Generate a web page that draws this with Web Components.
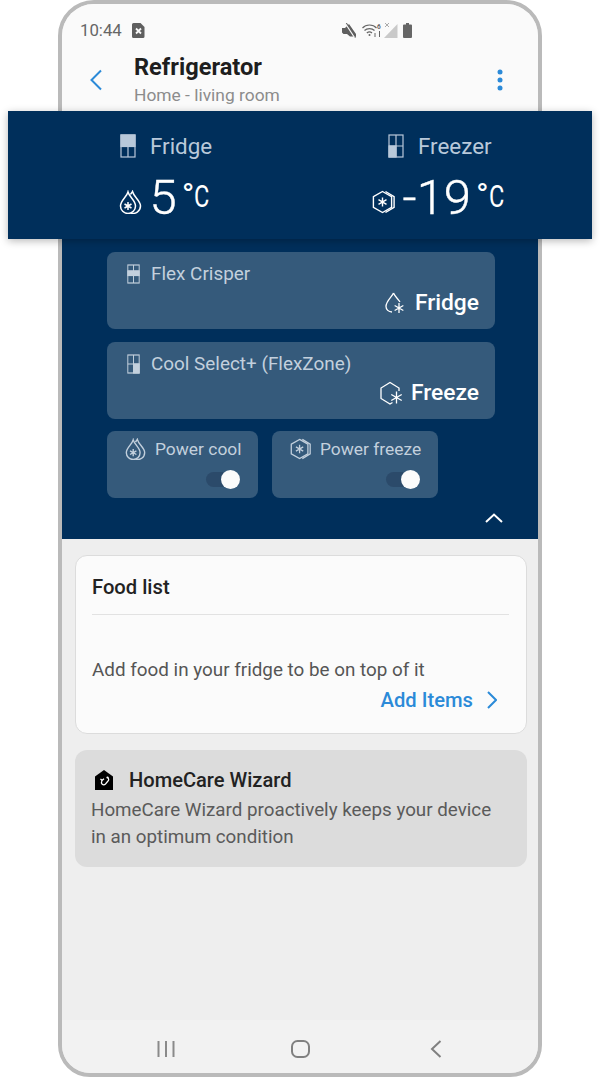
<!DOCTYPE html>
<html lang="en">
<head>
<meta charset="utf-8">
<title>Refrigerator</title>
<style>
  html, body { margin: 0; padding: 0; background: #fff; }
  body { font-family: Roboto, "Liberation Sans", sans-serif; }
</style>
</head>
<body>
<smart-phone>
  <status-bar></status-bar>
  <app-bar title="Refrigerator" subtitle="Home - living room"></app-bar>
  <control-panel>
    <mode-card label="Flex Crisper" zone="flex" mode="Fridge" icon="drop"></mode-card>
    <mode-card label="Cool Select+ (FlexZone)" zone="select" mode="Freeze" icon="hex"></mode-card>
    <div slot="power">
      <power-card label="Power cool" icon="drops" style="width:151px"></power-card>
      <power-card label="Power freeze" icon="hexes" style="width:166px;margin-left:14px"></power-card>
    </div>
  </control-panel>
  <food-card></food-card>
  <wizard-card></wizard-card>
  <nav-bar></nav-bar>
  <temp-banner slot="overlay"></temp-banner>
</smart-phone>

<script>
const star = (x, y, r) => {
    const a = r * 0.87, b = r * 0.5;
    return `<path d="M${x} ${y - r}V${y + r}M${x - a} ${y - b}L${x + a} ${y + b}M${x - a} ${y + b}L${x + a} ${y - b}"/>`;
};

const ICONS = {
    drops: `<svg viewBox="0 0 22 24" fill="none" stroke="currentColor" stroke-width="1.500">
        <path d="M8.500 2C7 7.500 1 10.500 1 16a7.500 7.500 0 0 0 15 0C16 10.500 10 7.500 8.500 2z"/>
        <path d="M11 4.500C11.500 3.500 12.500 2.500 13 1.500c1.500 6 8 9 8 14.500a7.500 7.500 0 0 1-10 7"/>
        ${star(8.5, 16, 4)}</svg>`,
    hexes: `<svg viewBox="0 0 23 23" fill="none" stroke="currentColor" stroke-width="1.400">
        <path d="M10.500 1l9.100 5.250v10.500L10.500 22 1.400 16.750V6.250z"/>
        <path d="M13.500 1l8.600 5.250v10.500L13.500 22"/>
        ${star(10.5, 11.5, 4.6)}</svg>`,
    drop: `<svg viewBox="0 0 20 22" fill="none" stroke="currentColor" stroke-width="1.300">
        <path d="M8.500 1C7 5 1 9 1 14.500c0 3 2.500 5.500 6 5.500M8.500 1C10 4.500 13 7 15 10"/>
        ${star(14, 16, 5)}</svg>`,
    hex: `<svg viewBox="0 0 24 24" fill="none" stroke="currentColor" stroke-width="1.300">
        <path d="M19 10V7L10 1.500 1 7v10.500L10 23l2.500-1.500M19 7"/>
        ${star(16.5, 16.5, 6)}</svg>`
};

// little fridge plan, which part of it is lit depends on the zone
const ZONES = {
    fridge: `<rect x="1" y="1" width="14" height="11.500" fill="currentColor"/><path d="M8 12.500V23M1 12.500h14"/>`,
    freezer: `<rect x="1" y="12" width="7" height="11" fill="currentColor"/><path d="M8 1V23M1 12h14"/>`,
    flex: `<rect x="1" y="7" width="14" height="4.500" fill="currentColor"/><path d="M8 1V7M8 11.500V19M1 7h14M1 11.500h14"/>`,
    select: `<rect x="8" y="10" width="7" height="9" fill="currentColor"/><path d="M8 1V19M1 10h14"/>`
};

function zoneIcon(name, w, h) {
    return `<svg width="${w}" height="${h}" viewBox="0 0 16 ${name === 'flex' || name === 'select' ? 20 : 24}" fill="none" stroke="currentColor" stroke-width="1.200" preserveAspectRatio="none">
        <rect x="1" y="1" width="14" height="${name === 'flex' || name === 'select' ? 18 : 22}"/>${ZONES[name]}</svg>`;
}

class SmartPhone extends HTMLElement {
    constructor() {
        super();
        this.attachShadow({mode: 'open'}).innerHTML = `
            <style>
                :host { display: block; position: relative; width: 484px; height: 1077px; margin-left: 58px; }
                .screen {
                    box-sizing: border-box; width: 100%; height: 100%;
                    border: 4px solid #bababa; border-radius: 36px 36px 32px 32px;
                    background: #eeeeee; overflow: hidden;
                    display: flex; flex-direction: column;
                }
                ::slotted([slot="overlay"]) { position: absolute; left: -50px; top: 111px; }
            </style>
            <div class="screen"><slot></slot></div>
            <slot name="overlay"></slot>`;
    }
}

class StatusBar extends HTMLElement {
    constructor() {
        super();
        this.attachShadow({mode: 'open'}).innerHTML = `
            <style>
                :host { display: flex; align-items: center; height: 44px; padding: 4px 0 0 18px; background: #fafafa; color: #666; flex: none; }
                .time { font-size: 16.800px; width: 52px; }
                .icons { display: flex; align-items: center; margin-left: 197px; }
                svg { display: block; }
            </style>
            <span class="time">10:44</span>
            <svg width="13" height="15" viewBox="0 0 13 15"><path fill="#5f5f5f" d="M1.500 0H8.500L12.500 4V13.500A1.500 1.500 0 0 1 11 15H1.500A1.500 1.500 0 0 1 0 13.500V1.500A1.500 1.500 0 0 1 1.500 0z"/><path stroke="#fafafa" stroke-width="1.800" d="M4 5.500l5 5M9 5.500l-5 5"/></svg>
            <div class="icons">
                <svg width="15" height="15" viewBox="0 0 15 15"><path fill="#5f5f5f" d="M0 5h3l4-4 7 10v2.500H8L5 11H1.500L0 9.500z"/><path stroke="#5f5f5f" stroke-width="1.500" d="M4 0l9.500 14.500"/><path stroke="#fafafa" stroke-width="1.200" d="M3 0l9.500 14.500"/></svg>
                <svg width="21" height="15" viewBox="0 0 21 15" style="margin-left:5px" fill="none" stroke="#666" stroke-width="1.200">
                    <path d="M0.500 5C4 1 11 1 14.500 5M2.500 7.500C5 5 10 5 12.500 7.500M4.800 10C6.500 8.700 8.500 8.700 10 10"/>
                    <circle cx="7.500" cy="12" r="1" fill="#666" stroke="none"/>
                    <path d="M13 10v4M17.500 8v6" stroke-width="1"/>
                    <text x="15" y="5.500" font-size="6.500" font-weight="700" font-family="Roboto" fill="#666" stroke="none">6</text>
                </svg>
                <svg width="14" height="15" viewBox="0 0 14 15" style="margin-left:1px"><path fill="#c9c9c9" d="M13.500 1V15H0z"/><path stroke="#aaa" d="M1 0l4 4M5 0L1 4"/></svg>
                <svg width="9" height="15" viewBox="0 0 9 15" style="margin-left:5px"><path fill="#666" d="M3 0h3v1.500h2A1 1 0 0 1 9 2.500V14a1 1 0 0 1-1 1H1a1 1 0 0 1-1-1V2.500A1 1 0 0 1 1 1.500h2z"/></svg>
            </div>`;
    }
}

class AppBar extends HTMLElement {
    connectedCallback() {
        if (this.shadowRoot) return;
        this.attachShadow({mode: 'open'}).innerHTML = `
            <style>
                :host { display: flex; align-items: flex-start; height: 59px; background: #fafafa; flex: none; position: relative; }
                .back { margin: 17px 0 0 26px; flex: none; }
                .text { margin-left: 30px; }
                h1 { margin: 0; font: 700 23.600px/30px Roboto, sans-serif; color: #1e1e1e; }
                p { margin: 2px 0 0; font: 400 17.400px/22px Roboto, sans-serif; color: #8c8c8c; }
                .more { margin: 17px 35px 0 auto; flex: none; }
            </style>
            <svg class="back" width="16" height="22" viewBox="0 0 16 22" fill="none" stroke="#2b8ad8" stroke-width="2"><path d="M13 1.500L3.500 11 13 20.500"/></svg>
            <div class="text"><h1>${this.getAttribute('title')}</h1><p>${this.getAttribute('subtitle')}</p></div>
            <svg class="more" width="6" height="22" viewBox="0 0 6 22" fill="#2b8ad8"><circle cx="3" cy="3" r="2.500"/><circle cx="3" cy="11" r="2.500"/><circle cx="3" cy="19" r="2.500"/></svg>`;
    }
}

class TempZone extends HTMLElement {
    connectedCallback() {
        if (this.shadowRoot) return;
        const zone = this.getAttribute('zone');
        this.attachShadow({mode: 'open'}).innerHTML = `
            <style>
                :host { display: flex; flex-direction: column; align-items: center; }
                .head { display: flex; align-items: center; gap: 14px; color: #b9c9da; font-size: 22.400px; line-height: 26px; margin-left: 5px; height: 26px; }
                .temp { display: flex; align-items: baseline; color: #fff; margin-top: 13px; height: 52px; }
                .temp svg { width: 23px; height: 24px; margin-right: 8px; align-self: center; margin-top: 7px; flex: none; }
                .value { font-size: 49px; font-weight: 300; line-height: 52px; -webkit-text-stroke: .4px #fff; }
                .unit { display: flex; align-items: baseline; margin-left: 5px; width: 27px; transform: translateY(-7px); }
                .deg { font-size: 34px; line-height: 30px; font-weight: 400; }
                .c { font-size: 31px; line-height: 30px; font-weight: 400; display: inline-block; transform: scaleX(.76); transform-origin: left; }
            </style>
            <div class="head">${zoneIcon(zone, 16, 24)}<span>${this.getAttribute('label')}</span></div>
            <div class="temp">${ICONS[this.getAttribute('icon')]}<span class="value">${this.getAttribute('value')}</span><span class="unit"><span class="deg">°</span><span class="c">C</span></span></div>`;
    }
}

class TempBanner extends HTMLElement {
    constructor() {
        super();
        this.attachShadow({mode: 'open'}).innerHTML = `
            <style>
                :host {
                    display: flex; justify-content: space-between; box-sizing: border-box;
                    width: 584px; height: 128px; padding: 22px 89px 0 107px;
                    background: #002f5b; box-shadow: 0 2px 8px rgba(0,0,0,.28);
                }
            </style>
            <temp-zone zone="fridge" label="Fridge" icon="drops" value="5"></temp-zone>
            <temp-zone zone="freezer" label="Freezer" icon="hexes" value="-19"></temp-zone>`;
    }
}

class ControlPanel extends HTMLElement {
    constructor() {
        super();
        this.attachShadow({mode: 'open'}).innerHTML = `
            <style>
                :host { display: block; box-sizing: border-box; height: 428px; padding: 141px 43px 0 45px; background: #002f5b; flex: none; position: relative; }
                .rows { display: flex; flex-direction: column; gap: 13px; }
                .power { margin-top: 12px; }
                ::slotted([slot="power"]) { display: flex; }
                .up { display: block; margin: 15px 0 0 378px; }
            </style>
            <div class="rows"><slot></slot></div>
            <div class="power"><slot name="power"></slot></div>
            <svg class="up" width="18" height="10" viewBox="0 0 18 10" fill="none" stroke="#fff" stroke-width="2"><path d="M1 9l8-7.500L17 9"/></svg>`;
    }
}

class ModeCard extends HTMLElement {
    connectedCallback() {
        if (this.shadowRoot) return;
        const icon = this.getAttribute('icon');
        this.attachShadow({mode: 'open'}).innerHTML = `
            <style>
                :host { display: flex; flex-direction: column; box-sizing: border-box; height: 77px; padding: 10px 16px 0 20px; background: #355a7b; border-radius: 8px; }
                .head { display: flex; align-items: center; gap: 11px; color: #c3d0dd; font-size: 18.900px; line-height: 24px; }
                .mode { display: flex; align-items: center; justify-content: flex-end; gap: ${icon === 'hex' ? 7 : 10}px; color: #fff; font-weight: 500; font-size: 22.800px; line-height: 28px; margin-top: 3px; }
                .mode svg { width: ${icon === 'hex' ? 24 : 20}px; height: ${icon === 'hex' ? 24 : 22}px; }
            </style>
            <div class="head">${zoneIcon(this.getAttribute('zone'), 13, 20)}<span>${this.getAttribute('label')}</span></div>
            <div class="mode">${ICONS[icon]}<span>${this.getAttribute('mode')}</span></div>`;
    }
}

class PowerCard extends HTMLElement {
    connectedCallback() {
        if (this.shadowRoot) return;
        this.attachShadow({mode: 'open'}).innerHTML = `
            <style>
                :host { display: flex; flex-direction: column; box-sizing: border-box; height: 67px; padding: 7px 18px 0 18px; background: #355a7b; border-radius: 8px; }
                .head { display: flex; align-items: center; gap: 9px; color: #c3d0dd; font-size: 17.400px; line-height: 22px; white-space: nowrap; }
                .head svg { width: 21px; height: 22px; flex: none; }
                .toggle { align-self: flex-end; position: relative; width: 34px; height: 15px; border-radius: 8px; background: #2b4a6a; margin-top: 12px; }
                .toggle i { position: absolute; right: 0; top: -2px; width: 19px; height: 19px; border-radius: 50%; background: #fbfbfb; }
            </style>
            <div class="head">${ICONS[this.getAttribute('icon')]}<span>${this.getAttribute('label')}</span></div>
            <div class="toggle"><i></i></div>`;
    }
}

class FoodCard extends HTMLElement {
    constructor() {
        super();
        this.attachShadow({mode: 'open'}).innerHTML = `
            <style>
                :host { display: block; box-sizing: border-box; height: 179px; margin: 16px 11px 0 13px; padding: 0 17px 0 16px; background: #fbfbfb; border: 1px solid #dcdcdc; border-radius: 12px; flex: none; }
                h2 { margin: 0; font: 500 20.200px/62px Roboto, sans-serif; color: #222; border-bottom: 1px solid #e2e2e2; height: 58px; }
                p { margin: 43px 0 0; font: 400 18.850px/24px Roboto, sans-serif; color: #555; }
                .link { display: flex; justify-content: flex-end; align-items: center; gap: 14px; margin: 5px -8px 0 0; padding-right: 20px; color: #2b8ad8; font: 500 20.200px/26px Roboto, sans-serif; }
            </style>
            <h2>Food list</h2>
            <p>Add food in your fridge to be on top of it</p>
            <div class="link"><span>Add Items</span><svg width="10" height="18" viewBox="0 0 10 18" fill="none" stroke="#2b8ad8" stroke-width="2"><path d="M1 1l8 8-8 8"/></svg></div>`;
    }
}

class WizardCard extends HTMLElement {
    constructor() {
        super();
        this.attachShadow({mode: 'open'}).innerHTML = `
            <style>
                :host { display: block; box-sizing: border-box; height: 117px; margin: 16px 11px 0 13px; padding: 17px 16px 0 16px; background: #dcdcdc; border-radius: 12px; flex: none; }
                .head { display: flex; align-items: center; gap: 16px; padding-left: 4px; height: 26px; font: 500 20.100px/26px Roboto, sans-serif; color: #222; }
                p { margin: 4px 0 0; font: 400 18.800px/27px Roboto, sans-serif; color: #5a5a5a; }
            </style>
            <div class="head">
                <svg width="18" height="20" viewBox="0 0 18 20"><path d="M9 0l9 6.500V20H0V6.500z"/><circle cx="12.500" cy="7.500" r="1.100" fill="#fff"/><path fill="none" stroke="#fff" stroke-width="1.200" d="M12.500 7.500c1.500 1 1.500 2.500.5 3.500l-2.500 3c-1 1-2.500 1-3.500 0-1-1.200-.5-2.500 0-3.500M7 10.500L5.500 8.800M7 10.500L9 8.800"/></svg>
                <span>HomeCare Wizard</span>
            </div>
            <p>HomeCare Wizard proactively keeps your device<br>in an optimum condition</p>`;
    }
}

class NavBar extends HTMLElement {
    constructor() {
        super();
        this.attachShadow({mode: 'open'}).innerHTML = `
            <style>
                :host { display: flex; align-items: flex-start; box-sizing: border-box; height: 53px; margin-top: auto; background: #f2f2f2; padding-top: 20px; flex: none; }
                svg { display: block; flex: none; }
            </style>
            <svg width="18" height="18" viewBox="0 0 18 18" fill="none" stroke="#8a8a8a" stroke-width="2" style="margin-left:95px"><path d="M1.500 1v16M9 1v16M16.500 1v16"/></svg>
            <svg width="20" height="18" viewBox="0 0 20 18" fill="none" stroke="#808080" stroke-width="2" style="margin-left:116px"><rect x="1" y="1" width="17" height="16" rx="5.500"/></svg>
            <svg width="12" height="18" viewBox="0 0 12 18" fill="none" stroke="#808080" stroke-width="2" style="margin-left:119px"><path d="M10.500 1L2 9l8.500 8"/></svg>`;
    }
}

customElements.define('smart-phone', SmartPhone);
customElements.define('status-bar', StatusBar);
customElements.define('app-bar', AppBar);
customElements.define('temp-zone', TempZone);
customElements.define('temp-banner', TempBanner);
customElements.define('control-panel', ControlPanel);
customElements.define('mode-card', ModeCard);
customElements.define('power-card', PowerCard);
customElements.define('food-card', FoodCard);
customElements.define('wizard-card', WizardCard);
customElements.define('nav-bar', NavBar);
</script>
</body>
</html>
